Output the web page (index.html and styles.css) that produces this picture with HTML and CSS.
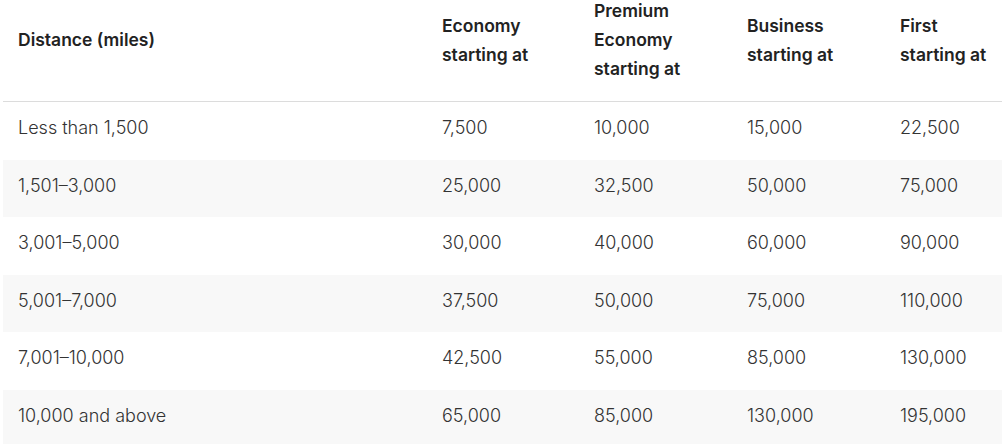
FILE: index.html
```html
<!DOCTYPE html>
<html>
<head>
<meta charset="utf-8">
<link rel="stylesheet" href="styles.css">
</head>
<body>
<div class="wrap">
<table class="awards">
  <colgroup>
    <col class="c-dist">
    <col class="c-eco">
    <col class="c-prem">
    <col class="c-bus">
    <col class="c-first">
  </colgroup>
  <thead>
    <tr>
      <th>Distance (miles)</th>
      <th>Economy<br>starting at</th>
      <th>Premium<br>Economy<br>starting at</th>
      <th>Business<br>starting at</th>
      <th>First<br>starting at</th>
    </tr>
  </thead>
  <tbody>
    <tr><td>Less than 1,500</td><td>7,500</td><td>10,000</td><td>15,000</td><td>22,500</td></tr>
    <tr><td>1,501–3,000</td><td>25,000</td><td>32,500</td><td>50,000</td><td>75,000</td></tr>
    <tr><td>3,001–5,000</td><td>30,000</td><td>40,000</td><td>60,000</td><td>90,000</td></tr>
    <tr><td>5,001–7,000</td><td>37,500</td><td>50,000</td><td>75,000</td><td>110,000</td></tr>
    <tr><td>7,001–10,000</td><td>42,500</td><td>55,000</td><td>85,000</td><td>130,000</td></tr>
    <tr><td>10,000 and above</td><td>65,000</td><td>85,000</td><td>130,000</td><td>195,000</td></tr>
  </tbody>
</table>
</div>
</body>
</html>
```
FILE: styles.css
```css
html, body {
  margin: 0;
  padding: 0;
  background: #fff;
  overflow: hidden;
}
.wrap {
  padding-left: 3px;
  margin-top: -21px;
}
.awards {
  border-collapse: collapse;
  table-layout: fixed;
  width: 1010px;
  font-family: "Inter", "Liberation Sans", sans-serif;
  color: #333;
}
.c-dist { width: 424px; }
.c-eco { width: 152px; }
.c-prem { width: 153px; }
.c-bus { width: 153px; }
.c-first { width: 128px; }
.awards th {
  text-align: left;
  font-size: 17.5px;
  font-weight: 600;
  color: #222;
  line-height: 29px;
  padding: 17px 15px 18px;
  vertical-align: middle;
  border-bottom: 1px solid #dcdcdc;
  white-space: nowrap;
}
.awards td {
  text-align: left;
  font-size: 18px;
  font-weight: 300;
  line-height: 29.5px;
  padding: 11px 15px 17px;
  vertical-align: middle;
  white-space: nowrap;
}
.awards tbody tr:nth-child(even) td {
  background: #f8f8f8;
}
```
